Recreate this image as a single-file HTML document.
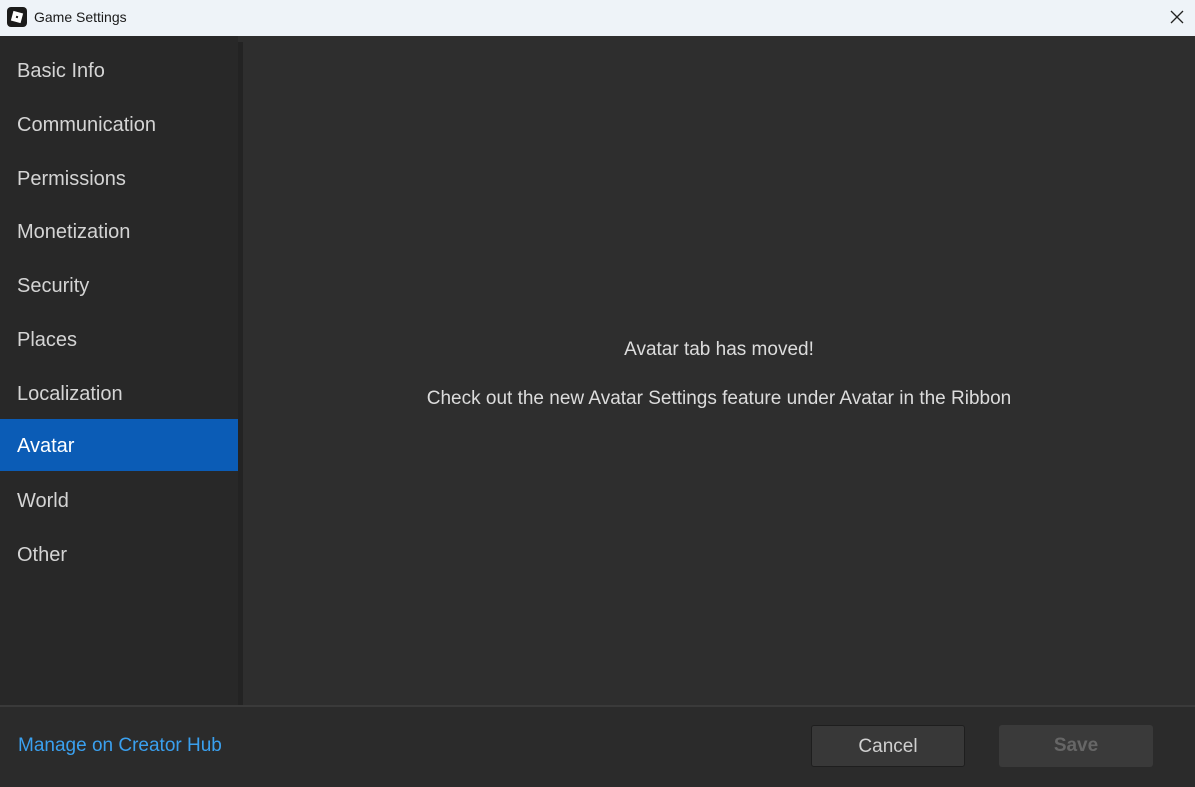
<!DOCTYPE html>
<html><head><style>
body{margin:0;width:1195px;height:787px;background:#2e2e2e;font-family:"Liberation Sans",sans-serif;overflow:hidden;position:relative}
.title{position:absolute;left:0;top:0;width:1195px;height:36px;background:#eef3f8;}
.title .t{position:absolute;left:34px;top:9px;font-size:14px;color:#1a1a1a}
.logo{position:absolute;left:7px;top:7px;width:20px;height:20px;background:#1b1b1b;border-radius:4px}
.logo i{position:absolute;left:5px;top:5px;width:10px;height:10px;background:#fff;transform:rotate(15deg)}
.logo i b{position:absolute;left:4px;top:4px;width:2px;height:2px;background:#1b1b1b}
.x{position:absolute;left:1170px;top:10px}
.side{position:absolute;left:0;top:36px;width:238px;height:669px;background:#282828}
.strip{position:absolute;left:238px;top:42px;width:5px;height:663px;background:#232323}
.item{position:absolute;left:0;width:238px;height:52px;line-height:54px;padding-left:17px;box-sizing:border-box;font-size:20px;color:#d4d4d4}
.sel{background:#0b5cb6;color:#fff}
.msg{position:absolute;left:243px;width:952px;text-align:center;font-size:19px;color:#dcdcdc}
.foot{position:absolute;left:0;top:705px;width:1195px;height:82px;background:#2b2b2b;border-top:2px solid #3a3a3a;box-sizing:border-box}
.link{position:absolute;left:18px;top:735px;font-size:19px;color:#3aa0ef}
.btn{position:absolute;top:725px;width:154px;height:42px;border-radius:3px;font-size:19px;text-align:center;line-height:42px;box-sizing:border-box}
</style></head><body>
<div class="title"><div class="logo"><i><b></b></i></div><div class="t">Game Settings</div>
<svg class="x" width="14" height="14" viewBox="0 0 14 14"><path d="M1 1L13 13M13 1L1 13" stroke="#222" stroke-width="1.3"/></svg></div>
<div class="side">
<div class="item" style="top:8px">Basic Info</div>
<div class="item" style="top:62px">Communication</div>
<div class="item" style="top:116px">Permissions</div>
<div class="item" style="top:169px">Monetization</div>
<div class="item" style="top:223px">Security</div>
<div class="item" style="top:277px">Places</div>
<div class="item" style="top:331px">Localization</div>
<div class="item sel" style="top:383px">Avatar</div>
<div class="item" style="top:438px">World</div>
<div class="item" style="top:492px">Other</div>
</div>
<div class="strip"></div>
<div class="msg" style="top:339px">Avatar tab has moved!</div>
<div class="msg" style="top:388px">Check out the new Avatar Settings feature under Avatar in the Ribbon</div>
<div class="foot"></div>
<div class="link">Manage on Creator Hub</div>
<div class="btn" style="left:811px;background:#383838;border:1px solid #1e1e1e;color:#d0d0d0">Cancel</div>
<div class="btn" style="left:999px;background:#3a3a3a;color:#666;font-weight:bold">Save</div>
</body></html>
